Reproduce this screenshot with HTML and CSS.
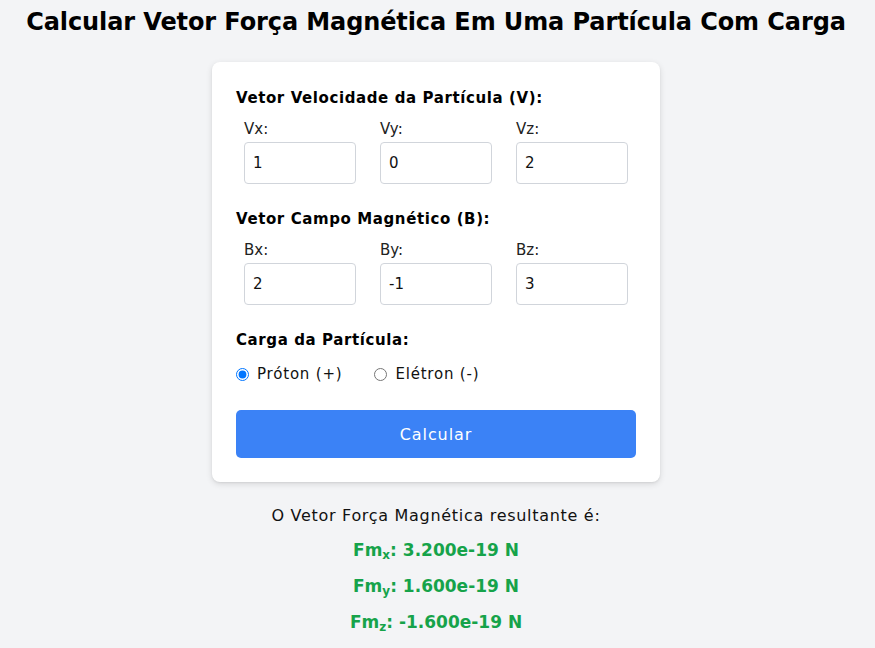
FILE: index.html
```html
<!DOCTYPE html>
<html lang="pt">
<head>
<meta charset="utf-8">
<title>Força Magnética</title>
<link rel="stylesheet" href="styles.css">
</head>
<body>
<h1 class="title">Calcular Vetor Força Magnética Em Uma Partícula Com Carga</h1>
<div class="card">
  <h2 class="section-title">Vetor Velocidade da Partícula (V):</h2>
  <div class="fields">
    <div class="field"><label class="field-label">Vx:</label><input class="field-input" type="text" value="1"></div>
    <div class="field"><label class="field-label">Vy:</label><input class="field-input" type="text" value="0"></div>
    <div class="field"><label class="field-label">Vz:</label><input class="field-input" type="text" value="2"></div>
  </div>
  <h2 class="section-title">Vetor Campo Magnético (B):</h2>
  <div class="fields">
    <div class="field"><label class="field-label">Bx:</label><input class="field-input" type="text" value="2"></div>
    <div class="field"><label class="field-label">By:</label><input class="field-input" type="text" value="-1"></div>
    <div class="field"><label class="field-label">Bz:</label><input class="field-input" type="text" value="3"></div>
  </div>
  <h2 class="section-title">Carga da Partícula:</h2>
  <div class="radios">
    <label class="radio"><input type="radio" name="carga" checked><span>Próton (+)</span></label>
    <label class="radio"><input type="radio" name="carga"><span>Elétron (-)</span></label>
  </div>
  <button class="btn" type="button">Calcular</button>
</div>
<div class="result">
  <p class="result-intro">O Vetor Força Magnética resultante é:</p>
  <p class="result-line">Fm<sub>x</sub>: 3.200e-19 N</p>
  <p class="result-line">Fm<sub>y</sub>: 1.600e-19 N</p>
  <p class="result-line">Fm<sub>z</sub>: -1.600e-19 N</p>
</div>
</body>
</html>
```
FILE: styles.css
```css
* { box-sizing: border-box; }
body {
  margin: 0;
  padding-right: 3px;
  background: #f3f4f6;
  font-family: "DejaVu Sans", "Noto Sans", sans-serif;
  color: #111;
}
.title {
  margin: 6px 0 24px;
  font-size: 24px;
  line-height: 32px;
  font-weight: 700;
  text-align: center;
  color: #000;
  letter-spacing: -0.1px;
}
.card {
  width: 448px;
  margin: 0 auto;
  background: #fff;
  border-radius: 8px;
  padding: 24px;
  box-shadow: 0 2px 6px rgba(0,0,0,0.12), 0 1px 2px rgba(0,0,0,0.06);
}
.section-title {
  margin: 0 0 8px;
  font-size: 15px;
  line-height: 24px;
  font-weight: 700;
  color: #000;
  letter-spacing: 0.6px;
}
.fields {
  display: grid;
  grid-template-columns: repeat(3, 1fr);
  column-gap: 24px;
  padding: 0 8px;
  margin-bottom: 23px;
}
.field { display: flex; flex-direction: column; }
.field-label {
  font-size: 15px;
  line-height: 22px;
  color: #222;
  margin-bottom: 2px;
}
.field-input {
  width: 100%;
  height: 42px;
  border: 1px solid #d1d5db;
  border-radius: 4px;
  padding: 0 8px;
  font: inherit;
  font-size: 15px;
  color: #111;
  background: #fff;
}
.radios {
  display: flex;
  gap: 32px;
  margin-top: 10px;
  margin-bottom: 24px;
  height: 24px;
  align-items: center;
}
.radio {
  display: flex;
  align-items: center;
  gap: 8px;
  font-size: 15px;
  letter-spacing: 0.8px;
  color: #111;
}
.radio input { margin: 0; width: 13px; height: 13px; }
.btn {
  display: block;
  width: 100%;
  height: 48px;
  border: 0;
  border-radius: 5px;
  background: #3b82f6;
  color: #fff;
  font: inherit;
  font-size: 16px;
  letter-spacing: 0.9px;
}
.result {
  text-align: center;
  margin-top: 22px;
}
.result-intro {
  margin: 0;
  font-size: 16px;
  line-height: 24px;
  letter-spacing: 0.7px;
  color: #111;
}
.result-line {
  margin: 8px 0 0;
  font-size: 17px;
  line-height: 28px;
  font-weight: 700;
  color: #16a34a;
}
.result-line sub {
  font-size: 12px;
  vertical-align: -3px;
  line-height: 0;
}
```
